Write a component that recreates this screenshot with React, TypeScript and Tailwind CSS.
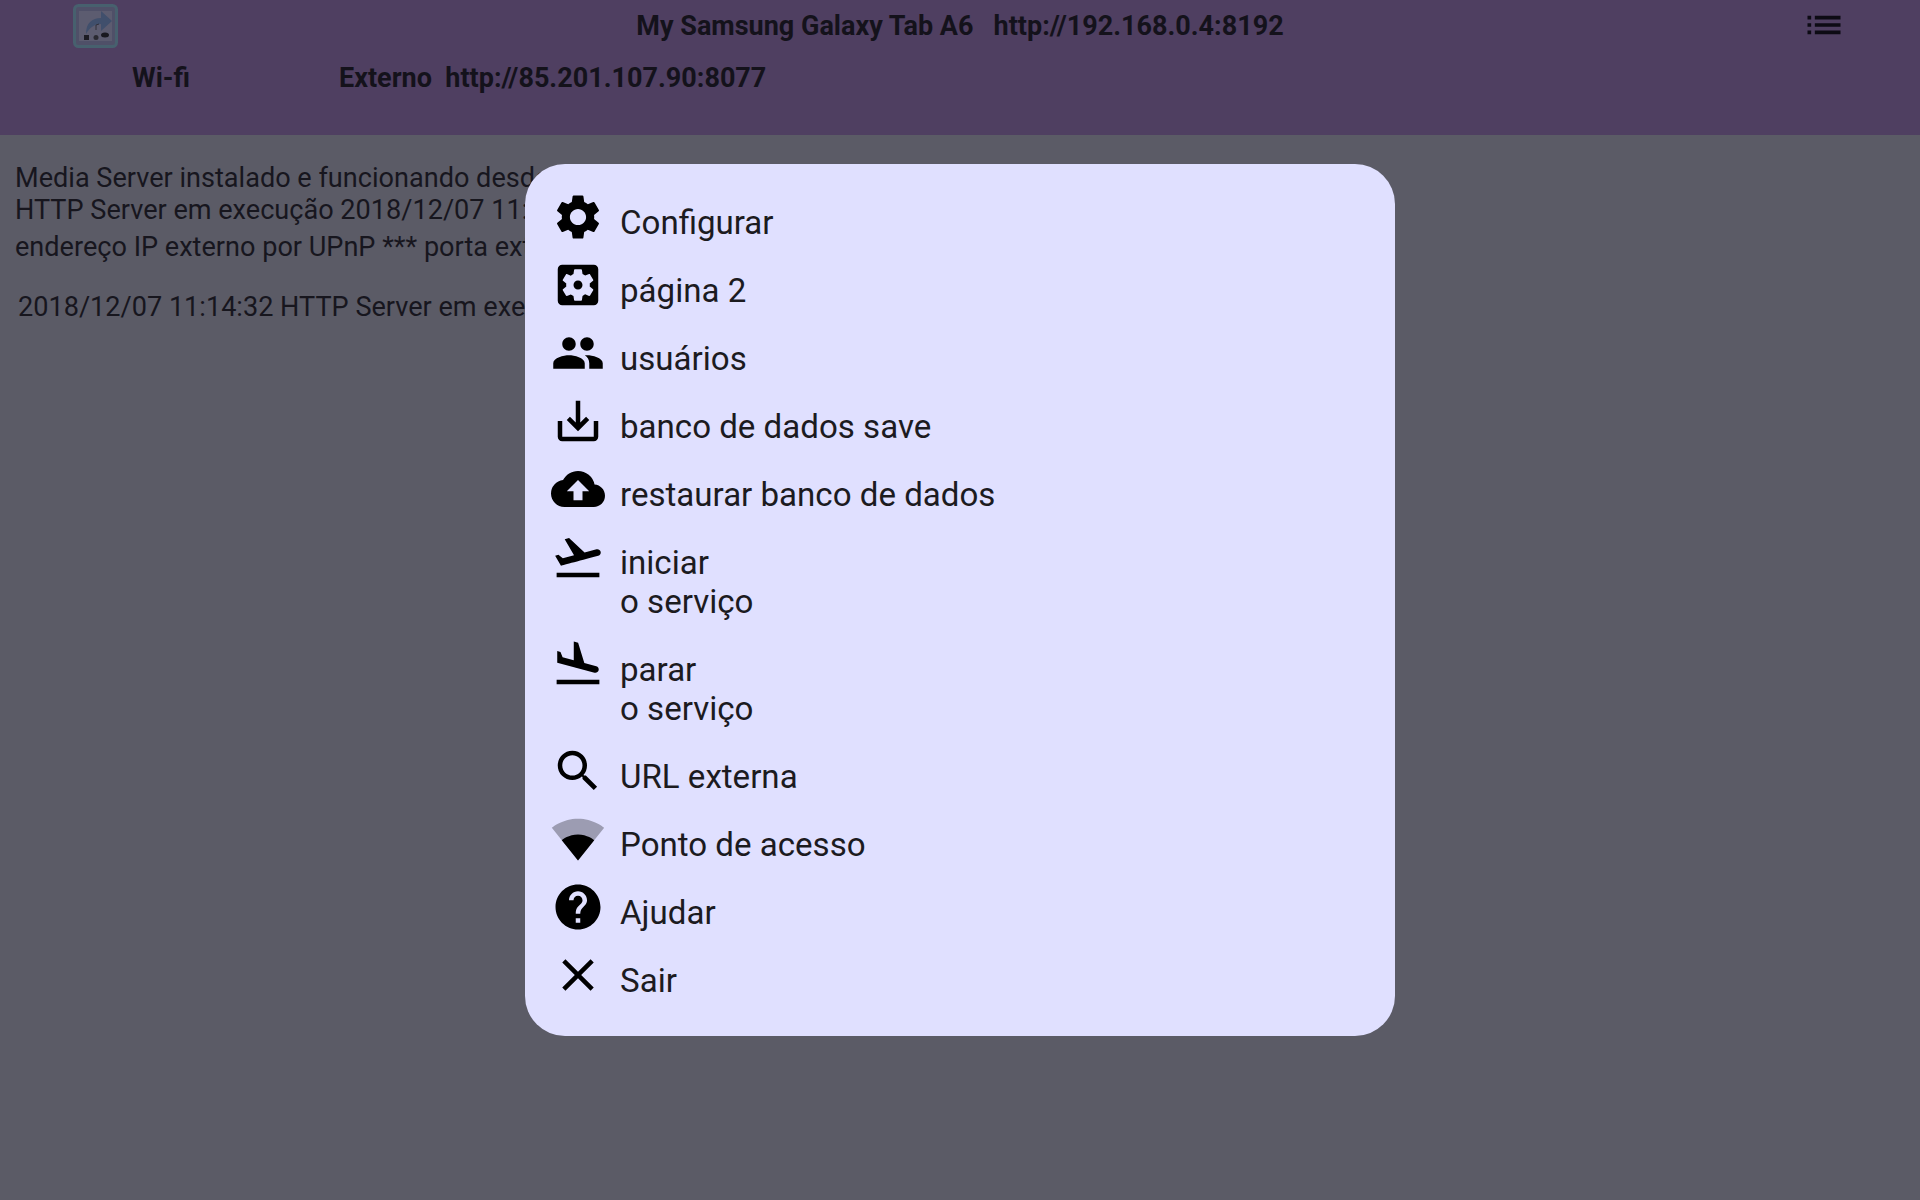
import React from "react";
import {
  MdSettings,
  MdSettingsApplications,
  MdPeople,
  MdSaveAlt,
  MdCloudUpload,
  MdFlightTakeoff,
  MdFlightLand,
  MdSearch,
  MdSignalWifi2Bar,
  MdHelp,
  MdClose,
  MdList,
} from "react-icons/md";

const menuItems = [
  { icon: MdSettings, label: "Configurar" },
  { icon: MdSettingsApplications, label: "página 2" },
  { icon: MdPeople, label: "usuários" },
  { icon: MdSaveAlt, label: "banco de dados save" },
  { icon: MdCloudUpload, label: "restaurar banco de dados" },
  { icon: MdFlightTakeoff, label: "iniciar\no serviço" },
  { icon: MdFlightLand, label: "parar\no serviço" },
  { icon: MdSearch, label: "URL externa" },
  { icon: MdSignalWifi2Bar, label: "Ponto de acesso" },
  { icon: MdHelp, label: "Ajudar" },
  { icon: MdClose, label: "Sair" },
];

const AppLogo = () => {
  return (
    <svg width="45" height="44" viewBox="0 0 45 44" fill="none">
      <rect x="1.5" y="1.5" width="42" height="41" rx="4" fill="#4f5068" stroke="#47606e" strokeWidth="3" />
      <rect x="6" y="7" width="33" height="30" fill="#5c5c70" />
      <path d="M13 30c0-11 6-16 15-16V7l11 10-11 10v-7c-6 0-11 3-15 10z" fill="#404f6c" />
      <rect x="11" y="31" width="5" height="5" fill="#1c1c24" />
      <circle cx="23" cy="33.5" r="2.5" fill="#2a2a32" />
      <ellipse cx="32" cy="31" rx="4" ry="2.5" fill="#191920" />
      <path d="M23 26v-5l3-1" stroke="#30303a" strokeWidth="1" />
    </svg>
  );
};

const Header = () => {
  return (
    <div className="h-[135px] bg-[#4f3f61] text-[#14121b] font-bold">
      <div className="grid grid-cols-[1fr_auto_1fr] h-[52px] items-center text-[27px]">
        <div className="pl-[73px] pb-[1px]">
          <AppLogo />
        </div>
        <span className="whitespace-pre pt-[1px]">My Samsung Galaxy Tab A6   http://192.168.0.4:8192</span>
        <div className="flex justify-end pr-[74px] pb-[2px]">
          <MdList size={44} color="#0d0b14" />
        </div>
      </div>
      <div className="flex text-[27px] h-[52px] items-center pl-[132px]">
        <span className="w-[207px]">Wi-fi</span>
        <span className="whitespace-pre">Externo  http://85.201.107.90:8077</span>
      </div>
    </div>
  );
};

const LogText = () => {
  return (
    <div className="pl-[15px] pt-[27px] text-[27.1px] text-[#17161e] whitespace-nowrap overflow-hidden">
      <div className="leading-[32px]">Media Server instalado e funcionando desde 2018/12/07</div>
      <div className="leading-[32px]">HTTP Server em execução 2018/12/07 11:14:32</div>
      <div className="leading-[32px] mt-[5px]">endereço IP externo por UPnP *** porta externa</div>
      <div className="leading-[32px] mt-[28px] pl-[3px]">2018/12/07 11:14:32 HTTP Server em execução</div>
    </div>
  );
};

const MenuDialog = () => {
  return (
    <div className="absolute inset-0 flex items-center justify-center">
      <div className="w-[870px] h-[872px] rounded-[40px] bg-[#e0e0ff] pt-[24px] pl-[26px]">
        {menuItems.map((item) => (
          <div key={item.label} className="flex items-start gap-[15px]">
            <item.icon size={54} color="#000000" className="mt-[2px] shrink-0" />
            <span className="pt-[15px] pb-[14px] text-[33.1px] leading-[39px] text-[#1c1b1f] whitespace-pre-line">
              {item.label}
            </span>
          </div>
        ))}
      </div>
    </div>
  );
};

export default function App() {
  return (
    <div className="relative h-[1200px] w-full overflow-hidden bg-[#5b5b66] font-['Roboto',sans-serif]">
      <Header />
      <LogText />
      <MenuDialog />
    </div>
  );
}
